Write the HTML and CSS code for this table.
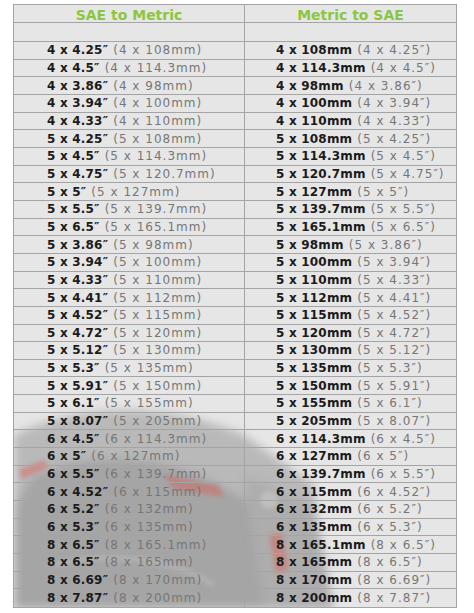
FILE: index.html
```html
<!DOCTYPE html>
<html>
<head>
<meta charset="utf-8">
<link rel="stylesheet" href="styles.css">
</head>
<body>
<div class="chart">
  <svg class="photo" width="444" height="604" viewBox="0 0 444 604" aria-hidden="true">
    <defs>
      <filter id="blur" x="-20%" y="-20%" width="140%" height="140%"><feGaussianBlur stdDeviation="5"/></filter>
      <filter id="blur2" x="-20%" y="-20%" width="140%" height="140%"><feGaussianBlur stdDeviation="2"/></filter>
    </defs>
    <g filter="url(#blur)" opacity="0.4">
      <path d="M0 430 C60 400 150 395 230 430 L300 480 L310 604 L0 604 Z" fill="#777"/>
      <path d="M20 470 C90 440 170 450 240 500 L270 560 L250 604 L0 604 L0 500 Z" fill="#444"/>
      <path d="M230 470 L300 500 L320 604 L250 604 Z" fill="#5a5a5a"/>
    </g>
    <g filter="url(#blur2)" opacity="0.4">
      <path d="M5 465 L30 455 L34 462 L8 474 Z" fill="#e0524c"/>
      <path d="M150 470 L205 480 L210 492 L160 484 Z" fill="#e0524c"/>
      <path d="M255 530 L268 528 L275 565 L262 568 Z" fill="#e0524c"/>
      <circle cx="255" cy="495" r="9" fill="#d8d8d8"/>
      <path d="M40 560 C100 545 160 555 200 580" stroke="#c4c4c4" stroke-width="5" fill="none"/>
    </g>
  </svg>
  <div class="grid">
    <div class="cell head left">SAE to Metric</div>
    <div class="cell head">Metric to SAE</div>
    <div class="cell blank left"></div>
    <div class="cell blank"></div>

    <div class="cell left"><b>4 x 4.25″</b><span>(4 x 108mm)</span></div><div class="cell"><b>4 x 108mm</b><span>(4 x 4.25″)</span></div>
    <div class="cell left"><b>4 x 4.5″</b><span>(4 x 114.3mm)</span></div><div class="cell"><b>4 x 114.3mm</b><span>(4 x 4.5″)</span></div>
    <div class="cell left"><b>4 x 3.86″</b><span>(4 x 98mm)</span></div><div class="cell"><b>4 x 98mm</b><span>(4 x 3.86″)</span></div>
    <div class="cell left"><b>4 x 3.94″</b><span>(4 x 100mm)</span></div><div class="cell"><b>4 x 100mm</b><span>(4 x 3.94″)</span></div>
    <div class="cell left"><b>4 x 4.33″</b><span>(4 x 110mm)</span></div><div class="cell"><b>4 x 110mm</b><span>(4 x 4.33″)</span></div>
    <div class="cell left"><b>5 x 4.25″</b><span>(5 x 108mm)</span></div><div class="cell"><b>5 x 108mm</b><span>(5 x 4.25″)</span></div>
    <div class="cell left"><b>5 x 4.5″</b><span>(5 x 114.3mm)</span></div><div class="cell"><b>5 x 114.3mm</b><span>(5 x 4.5″)</span></div>
    <div class="cell left"><b>5 x 4.75″</b><span>(5 x 120.7mm)</span></div><div class="cell"><b>5 x 120.7mm</b><span>(5 x 4.75″)</span></div>
    <div class="cell left"><b>5 x 5″</b><span>(5 x 127mm)</span></div><div class="cell"><b>5 x 127mm</b><span>(5 x 5″)</span></div>
    <div class="cell left"><b>5 x 5.5″</b><span>(5 x 139.7mm)</span></div><div class="cell"><b>5 x 139.7mm</b><span>(5 x 5.5″)</span></div>
    <div class="cell left"><b>5 x 6.5″</b><span>(5 x 165.1mm)</span></div><div class="cell"><b>5 x 165.1mm</b><span>(5 x 6.5″)</span></div>
    <div class="cell left"><b>5 x 3.86″</b><span>(5 x 98mm)</span></div><div class="cell"><b>5 x 98mm</b><span>(5 x 3.86″)</span></div>
    <div class="cell left"><b>5 x 3.94″</b><span>(5 x 100mm)</span></div><div class="cell"><b>5 x 100mm</b><span>(5 x 3.94″)</span></div>
    <div class="cell left"><b>5 x 4.33″</b><span>(5 x 110mm)</span></div><div class="cell"><b>5 x 110mm</b><span>(5 x 4.33″)</span></div>
    <div class="cell left"><b>5 x 4.41″</b><span>(5 x 112mm)</span></div><div class="cell"><b>5 x 112mm</b><span>(5 x 4.41″)</span></div>
    <div class="cell left"><b>5 x 4.52″</b><span>(5 x 115mm)</span></div><div class="cell"><b>5 x 115mm</b><span>(5 x 4.52″)</span></div>
    <div class="cell left"><b>5 x 4.72″</b><span>(5 x 120mm)</span></div><div class="cell"><b>5 x 120mm</b><span>(5 x 4.72″)</span></div>
    <div class="cell left"><b>5 x 5.12″</b><span>(5 x 130mm)</span></div><div class="cell"><b>5 x 130mm</b><span>(5 x 5.12″)</span></div>
    <div class="cell left"><b>5 x 5.3″</b><span>(5 x 135mm)</span></div><div class="cell"><b>5 x 135mm</b><span>(5 x 5.3″)</span></div>
    <div class="cell left"><b>5 x 5.91″</b><span>(5 x 150mm)</span></div><div class="cell"><b>5 x 150mm</b><span>(5 x 5.91″)</span></div>
    <div class="cell left"><b>5 x 6.1″</b><span>(5 x 155mm)</span></div><div class="cell"><b>5 x 155mm</b><span>(5 x 6.1″)</span></div>
    <div class="cell left"><b>5 x 8.07″</b><span>(5 x 205mm)</span></div><div class="cell"><b>5 x 205mm</b><span>(5 x 8.07″)</span></div>
    <div class="cell left"><b>6 x 4.5″</b><span>(6 x 114.3mm)</span></div><div class="cell"><b>6 x 114.3mm</b><span>(6 x 4.5″)</span></div>
    <div class="cell left"><b>6 x 5″</b><span>(6 x 127mm)</span></div><div class="cell"><b>6 x 127mm</b><span>(6 x 5″)</span></div>
    <div class="cell left"><b>6 x 5.5″</b><span>(6 x 139.7mm)</span></div><div class="cell"><b>6 x 139.7mm</b><span>(6 x 5.5″)</span></div>
    <div class="cell left"><b>6 x 4.52″</b><span>(6 x 115mm)</span></div><div class="cell"><b>6 x 115mm</b><span>(6 x 4.52″)</span></div>
    <div class="cell left"><b>6 x 5.2″</b><span>(6 x 132mm)</span></div><div class="cell"><b>6 x 132mm</b><span>(6 x 5.2″)</span></div>
    <div class="cell left"><b>6 x 5.3″</b><span>(6 x 135mm)</span></div><div class="cell"><b>6 x 135mm</b><span>(6 x 5.3″)</span></div>
    <div class="cell left"><b>8 x 6.5″</b><span>(8 x 165.1mm)</span></div><div class="cell"><b>8 x 165.1mm</b><span>(8 x 6.5″)</span></div>
    <div class="cell left"><b>8 x 6.5″</b><span>(8 x 165mm)</span></div><div class="cell"><b>8 x 165mm</b><span>(8 x 6.5″)</span></div>
    <div class="cell left"><b>8 x 6.69″</b><span>(8 x 170mm)</span></div><div class="cell"><b>8 x 170mm</b><span>(8 x 6.69″)</span></div>
    <div class="cell left"><b>8 x 7.87″</b><span>(8 x 200mm)</span></div><div class="cell"><b>8 x 200mm</b><span>(8 x 7.87″)</span></div>
  </div>
</div>
</body>
</html>
```

FILE: styles.css
```css
html, body {
  margin: 0;
  padding: 0;
  background: #fff;
}
body {
  font-family: "DejaVu Sans", "Open Sans", sans-serif;
}
.chart {
  position: relative;
  margin: 4px 0 0 13px;
  width: 444px;
  height: 604px;
  box-sizing: border-box;
  border: 1px solid #a4a4a4;
  background: #e6e6e6;
  overflow: hidden;
}
.photo {
  position: absolute;
  left: 0;
  top: 0;
  z-index: 0;
}
.grid {
  position: relative;
  z-index: 1;
  display: grid;
  grid-template-columns: 231px 1fr;
  grid-template-rows: 18px 19px repeat(32, 1fr);
  height: 100%;
}
.cell {
  box-sizing: border-box;
  border-bottom: 1px solid #a4a4a4;
  display: flex;
  align-items: center;
  gap: 5px;
  padding-left: 31px;
  font-size: 12px;
  white-space: nowrap;
  line-height: 1;
}
.cell:nth-last-child(-n+2) {
  border-bottom: none;
}
.cell.left {
  border-right: 1px solid #a4a4a4;
  padding-left: 33px;
}
.cell b {
  font-weight: 700;
  color: #1b1b1b;
  letter-spacing: 0.2px;
}
.cell span {
  color: #767676;
  font-weight: 400;
  letter-spacing: 1px;
}
.cell.head {
  justify-content: center;
  padding: 2px 0 0 0;
  color: #8cc63f;
  font-weight: 700;
  font-size: 14px;
}
```
